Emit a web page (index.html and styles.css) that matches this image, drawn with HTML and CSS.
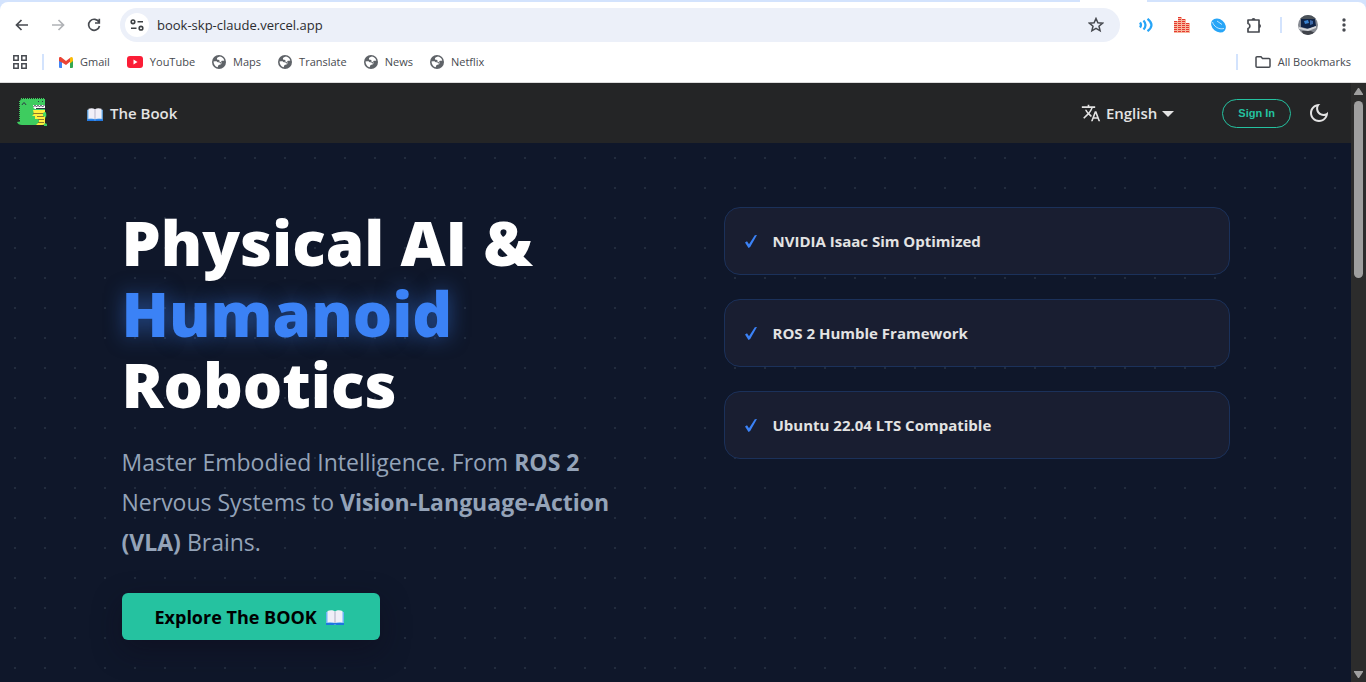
FILE: index.html
```
<!DOCTYPE html>
<html lang="en">
<head>
    <meta charset="UTF-8">
    <meta name="viewport" content="width=device-width, initial-scale=1.0">
    <title>Physical AI &amp; Humanoid Robotics</title>
    <link rel="stylesheet" href="styles.css">
</head>
<body>
    <!-- shared icons -->
    <svg class="sprite" aria-hidden="true">
        <symbol id="globe" viewBox="0 0 14 14">
            <circle cx="7" cy="7" r="7" fill="#5f6368"/>
            <path d="M8 1.500C6 2 4.500 3 5 4.200c.5 1 2 .3 2.500 1.300.5 1.200-2.500 1-4.500.8L1.500 6.500C1.500 9 3 11.500 5.500 12.300c.7-.8.5-1.800 1.200-2.300 1-.7 2.300-.2 2.800-1.500.4-1-.6-1.600-.2-2.300.5-.9 2-.3 3-.8C11.500 3 10 1.800 8 1.500z" fill="#fff"/>
            <path d="M5 6.500c2 .2 4 .6 4 2" fill="none" stroke="#5f6368" stroke-width="1.200"/>
        </symbol>
        <symbol id="book" viewBox="0 0 18 15">
            <path d="M0 2h18v13H0z" fill="#6db4f5"/>
            <path d="M0 13h18v2H10.500l-1.500-.7-1.500.7H0z" fill="#1f76e0"/>
            <path d="M1.500 1C4 0 7 0 9 1.500 11 0 14 0 16.500 1v11.500C14 12 11 12 9 13c-2-1-5-1-7.500-.5z" fill="#f0eff8"/>
            <path d="M9 1.500V13" stroke="#b9b8cc" stroke-width="1.200"/>
        </symbol>
        <symbol id="check" viewBox="0 0 12 13">
            <path d="M0 7.500 2 6.300 4 9.300 9.800.3 12 0 5.200 12 3.500 13z" fill="#3b82f6"/>
        </symbol>
    </svg>

    <div class="browser">
        <div class="tab-strip"><span class="active-tab"></span></div>
        <div class="toolbar">
            <button class="tool" aria-label="Back"><svg width="14" height="12" viewBox="0 0 14 12"><path d="M13 6H1.500M6.500 1l-5 5 5 5" fill="none" stroke="#474a50" stroke-width="1.700"/></svg></button>
            <button class="tool" aria-label="Forward"><svg width="14" height="12" viewBox="0 0 14 12"><path d="M1 6h11.500M7.500 1l5 5-5 5" fill="none" stroke="#b0b2b6" stroke-width="1.700"/></svg></button>
            <button class="tool" aria-label="Reload"><svg width="14" height="14" viewBox="0 0 14 14"><path d="M12 4.200A5.500 5.500 0 1 0 12.500 8M12.300.800v4.200H8" fill="none" stroke="#474a50" stroke-width="1.700"/></svg></button>
            <div class="omnibox">
                <button class="site-info" aria-label="View site information"><svg width="14" height="12" viewBox="0 0 14 12" fill="none" stroke="#3c4043" stroke-width="1.600"><circle cx="3" cy="2.800" r="1.800"/><path d="M7.500 2.800H13M1 9.200h5.500"/><circle cx="11" cy="9.200" r="1.800"/></svg></button>
                <input type="text" class="url" aria-label="Address" value="book-skp-claude.vercel.app">
                <button class="star" aria-label="Bookmark this tab"><svg width="16" height="16" viewBox="0 0 16 16"><path d="M8 1.500l1.900 4.300 4.700.4-3.600 3 1.100 4.600L8 11.400l-4.100 2.400L5 9.200l-3.600-3 4.700-.4z" fill="none" stroke="#474a50" stroke-width="1.500"/></svg></button>
            </div>
            <div class="extensions">
                <button class="tool" aria-label="Read aloud"><svg width="14" height="14" viewBox="0 0 14 14" fill="none" stroke="#27a5f7" stroke-width="2.200"><path d="M1 4.500q2 2.500 0 5"/><path d="M4.500 2.500q4 4.500 0 9"/><path d="M8.500.800q8 6.200 0 12.400"/></svg></button>
                <button class="tool" aria-label="Volume"><svg width="16" height="16" viewBox="0 0 16 16"><path d="M0 4h4V0h4v2h4v4h4v10H0z" fill="#f7b79e"/><path d="M0 4.500h4M4 .500h4M4 2.500h8M0 6.500h16M4 4.500h8M0 8.500h16M0 10.500h16M0 12.500h16M0 14.500h16" stroke="#e53a30" stroke-dasharray="3 1"/></svg></button>
                <button class="tool" aria-label="Disc"><svg width="15" height="15" viewBox="0 0 15 15"><ellipse cx="7.500" cy="7.500" rx="8" ry="6.300" transform="rotate(40 7.500 7.500)" fill="#27a5f7"/><path d="M1.500 4c1 4 6 8 11.500 6.500M6 3l5 3.500" fill="none" stroke="#fff" stroke-width=".7"/></svg></button>
                <button class="tool" aria-label="Extensions"><svg width="18" height="18" viewBox="0 0 18 18"><path d="M3 4h11v12H3v-3.500c2.500-.5 2.500-4.500 0-5z" fill="none" stroke="#474a50" stroke-width="1.700" stroke-linejoin="round"/><path d="M6.500 4a2 2 0 0 1 4 0zM14 8a2 2 0 0 1 0 4z" fill="#474a50"/></svg></button>
                <span class="divider"></span>
                <button class="tool" aria-label="Profile"><svg width="20" height="20" viewBox="0 0 20 20"><clipPath id="avatar"><circle cx="10" cy="10" r="10"/></clipPath><g clip-path="url(#avatar)"><path d="M0 0h20v20H0z" fill="#858991"/><path d="M0 0h20v4H0z" fill="#4c535a"/><path d="M3 4h14l1 7-7 3-8-2z" fill="#102447"/><path d="M6 6l4-1 1 3-4 1z" fill="#3b83cf"/><path d="M12 5l3 1v3l-3 1z" fill="#3d69a8"/><path d="M1 12l8 2 9-3v2l-8 3-9-2z" fill="#d5d7da"/><path d="M4 16h9l4 2-5 2H5z" fill="#41444b"/></g></svg></button>
                <button class="tool" aria-label="Menu"><svg width="4" height="14" viewBox="0 0 4 14" fill="#474a50"><circle cx="2" cy="2" r="1.700"/><circle cx="2" cy="7" r="1.700"/><circle cx="2" cy="12" r="1.700"/></svg></button>
            </div>
        </div>
        <div class="bookmarks">
            <button class="apps" aria-label="Apps"><svg width="14" height="14" viewBox="0 0 14 14" fill="none" stroke="#474a50" stroke-width="1.500"><path d="M.800.800h4.400v4.400H.800zM8.800.800h4.400v4.400H8.800zM.800 8.800h4.400v4.400H.800zM8.800 8.800h4.400v4.400H8.800z"/></svg></button>
            <span class="divider"></span>
            <a href="#"><svg width="14" height="11" viewBox="0 0 14 11"><path d="M0 2h3v9H1a1 1 0 0 1-1-1z" fill="#4285f4"/><path d="M11 2h3v8a1 1 0 0 1-1 1h-2z" fill="#34a853"/><path d="M0 1.500C0 0 1.500-.3 2.500.5L7 4l4.500-3.500 1 3L7 8 3 5.500 0 4z" fill="#ea4335"/><path d="M11 1q2-2 3 .5V4l-3 2.500z" fill="#fbbc04"/></svg>Gmail</a>
            <a href="#"><svg width="16" height="12" viewBox="0 0 16 12"><rect width="16" height="12" rx="3" fill="#fb1d36"/><path d="M6.500 3.500v5L10.500 6z" fill="#fff"/></svg>YouTube</a>
            <a href="#"><svg width="14" height="14"><use href="#globe"/></svg>Maps</a>
            <a href="#"><svg width="14" height="14"><use href="#globe"/></svg>Translate</a>
            <a href="#"><svg width="14" height="14"><use href="#globe"/></svg>News</a>
            <a href="#"><svg width="14" height="14"><use href="#globe"/></svg>Netflix</a>
            <span class="divider last"></span>
            <a href="#"><svg width="16" height="12" viewBox="0 0 16 12"><path d="M1 10.200V1.800a1 1 0 0 1 1-1h4l1.500 1.700H14a1 1 0 0 1 1 1v6.700a1 1 0 0 1-1 1H2a1 1 0 0 1-1-1z" fill="none" stroke="#474a50" stroke-width="1.500"/></svg>All Bookmarks</a>
        </div>
    </div>

    <div class="viewport">
        <div class="page">
            <nav class="navbar">
                <a href="#" class="logo" aria-label="Home">
                    <svg width="32" height="32" viewBox="0 0 32 32">
                        <path d="M4 4q0-2 2-2h23v13l1 1v3l-1 3v4l2 1v2h-3v-1H6q-4 0-5-3l3-.5z" fill="#3ecc5f"/>
                        <path d="M3.500 4v20M5 1.500h24" stroke="#3ecc5f" stroke-dasharray="1 1"/>
                        <path d="M17 13h12v12q0 3-3 3h-6l3-3v-3h-4v-3h-3l2-2z" fill="#ffee3d"/>
                        <path d="M17 8h12v4H19q-2-1-2-4z" fill="#fff"/>
                        <path d="M17.500 9.500l1.500-1 1.500 1 1.500-1 1.500 1 1.500-1 1.500 1 2-1M20 11.500h9" fill="none" stroke="#303846"/>
                        <path d="M6 8q2-4.500 4 0M22 4.500h1M26 4.500h1" fill="none" stroke="#303846"/>
                        <path d="M17 16.500h10M21 19.500h7M22 22.500h6M22 25.500h6" fill="none" stroke="#8a7a2c"/>
                        <path d="M29 15q2 1 1 5l-3-1v-3z" fill="#44d860"/>
                    </svg>
                </a>
                <a href="#" class="nav-link"><svg class="book" width="16" height="13"><use href="#book"/></svg>The Book</a>
                <div class="nav-right">
                    <button class="nav-link language">
                        <svg width="20" height="20" viewBox="0 0 24 24" fill="currentColor"><path d="M12.870 15.070l-2.540-2.510.03-.03c1.740-1.940 2.980-4.170 3.710-6.530H17V4h-7V2H8v2H1v1.990h11.170C11.500 7.920 10.440 9.750 9 11.350 8.070 10.320 7.300 9.190 6.690 8h-2c.73 1.630 1.730 3.170 2.980 4.560l-5.090 5.020L4 19l5-5 3.110 3.110.76-2.040zM18.500 10h-2L12 22h2l1.120-3h4.750L21 22h2l-4.500-12zm-2.620 7l1.620-4.330L19.120 17h-3.240z"/></svg>
                        English
                        <svg class="caret" width="12" height="6"><path d="M0 0h12L6 6z" fill="currentColor"/></svg>
                    </button>
                    <button class="sign-in">Sign In</button>
                    <button class="theme" aria-label="Toggle dark mode"><svg width="24" height="24" viewBox="0 0 24 24"><path fill="currentColor" d="M9.370,5.510C9.190,6.150,9.100,6.820,9.100,7.500c0,4.080,3.320,7.400,7.400,7.400c0.680,0,1.350-0.090,1.990-0.270C17.450,17.190,14.930,19,12,19 c-3.860,0-7-3.140-7-7C5,9.070,6.810,6.550,9.370,5.510z M12,3c-4.970,0-9,4.030-9,9s4.030,9,9,9s9-4.030,9-9c0-0.460-0.040-0.920-0.100-1.360 c-0.980,1.370-2.580,2.260-4.400,2.260c-2.980,0-5.400-2.420-5.400-5.400c0-1.810,0.890-3.420,2.260-4.400C12.920,3.040,12.460,3,12,3L12,3z"/></svg></button>
                </div>
            </nav>

            <header class="hero">
                <div class="container">
                    <div class="intro">
                        <h1>Physical AI &amp; <span class="highlight">Humanoid</span> Robotics</h1>
                        <p>Master Embodied Intelligence. From <b>ROS 2</b> Nervous Systems to <b>Vision-Language-Action (VLA)</b> Brains.</p>
                        <a href="#" class="explore">Explore The BOOK <svg class="book" width="18" height="15"><use href="#book"/></svg></a>
                    </div>
                    <div class="features">
                        <div class="feature"><svg width="12" height="13"><use href="#check"/></svg>NVIDIA Isaac Sim Optimized</div>
                        <div class="feature"><svg width="12" height="13"><use href="#check"/></svg>ROS 2 Humble Framework</div>
                        <div class="feature"><svg width="12" height="13"><use href="#check"/></svg>Ubuntu 22.04 LTS Compatible</div>
                    </div>
                </div>
            </header>
        </div>
        <div class="scrollbar">
            <svg width="9" height="7"><path d="M4 0h1l4 6v1H0V6z" fill="#9f9f9f"/></svg>
            <span class="thumb"></span>
            <svg class="down" width="9" height="7"><path d="M4 7h1l4-6V0H0v1z" fill="#9f9f9f"/></svg>
        </div>
    </div>
</body>
</html>
```

FILE: styles.css
```
* {
    box-sizing: border-box;
}
body {
    margin: 0;
    height: 100vh;
    display: flex;
    flex-direction: column;
    overflow: hidden;
    font-family: "Segoe UI", "Open Sans", sans-serif;
    background: #0f172a;
}
a {
    text-decoration: none;
}
button {
    border: none;
    padding: 0;
    background: none;
    font-family: inherit;
    cursor: pointer;
}
svg {
    display: block;
    flex: none;
}
.sprite {
    position: absolute;
    width: 0;
    height: 0;
}

/* browser bar */
.browser {
    flex: none;
    background: #d3e3fd;
    border-bottom: 1px solid #dcdcdc;
}
.tab-strip {
    height: 2px;
    display: flex;
    justify-content: flex-end;
}
.active-tab {
    width: 67px;
    margin-right: 219px;
    background: #fff;
}
.toolbar {
    height: 46px;
    display: flex;
    align-items: center;
    padding: 0 4px;
    background: #fff;
    border-radius: 8px 8px 0 0;
}
.tool {
    width: 36px;
    height: 34px;
    display: flex;
    align-items: center;
    justify-content: center;
}
.omnibox {
    flex: 1;
    height: 34px;
    margin: 0 8px;
    padding: 0 16px 0 5px;
    display: flex;
    align-items: center;
    border-radius: 17px;
    background: #ecf0f9;
}
.site-info {
    width: 24px;
    height: 24px;
    display: flex;
    align-items: center;
    justify-content: center;
    border-radius: 50%;
    background: #fff;
}
.url {
    flex: 1;
    margin-left: 8px;
    padding: 0;
    border: none;
    outline: none;
    background: none;
    font-family: inherit;
    font-size: 13px;
    color: #2b2c30;
}
.extensions {
    display: flex;
    align-items: center;
}
.divider {
    width: 2px;
    height: 16px;
    margin: 0 8px;
    background: #d3e3fd;
}
.bookmarks {
    height: 34px;
    padding: 0 15px 6px 13px;
    display: flex;
    align-items: center;
    background: #fff;
}
.bookmarks .divider {
    margin: 0 15px;
}
.bookmarks .divider.last {
    margin: 0 17px 0 auto;
}
.bookmarks a {
    display: flex;
    align-items: center;
    gap: 7px;
    font-size: 11px;
    line-height: 16px;
    color: #474a50;
}
.bookmarks a + a {
    margin-left: 17px;
}

/* page */
.viewport {
    flex: 1;
    min-height: 0;
    display: flex;
}
.page {
    flex: 1;
    display: flex;
    flex-direction: column;
}
.navbar {
    height: 60px;
    flex: none;
    display: flex;
    align-items: center;
    padding: 0 20px 0 16px;
    background: #242526;
    color: #e3e3e3;
}
.logo {
    margin-right: 39px;
}
.nav-link {
    display: flex;
    align-items: center;
    gap: 7px;
    font-size: 15px;
    font-weight: 600;
    color: #e3e3e3;
}
.book {
    margin-top: 2px;
}
.nav-right {
    margin-left: auto;
    display: flex;
    align-items: center;
}
.language {
    gap: 5px;
    margin-right: 48px;
}
.caret {
    margin-top: 2px;
}
.sign-in {
    height: 29px;
    padding: 0 15px;
    margin-right: 16px;
    border: 1px solid #25c2a0;
    border-radius: 15px;
    font-family: "Liberation Sans", Arial, sans-serif;
    font-size: 11px;
    font-weight: bold;
    color: #25c2a0;
}
.theme {
    color: #e3e3e3;
}
.hero {
    flex: 1;
    padding: 64px 0;
    background-color: #0f172a;
    background-image: radial-gradient(#222c3e 1px, transparent 1px);
    background-size: 30px 30px;
}
.container {
    max-width: 1140px;
    margin: 0 auto;
    padding: 0 16px;
    display: grid;
    grid-template-columns: 1fr 1fr;
    gap: 96px;
}
h1 {
    margin: 0 0 22px;
    font-size: 62px;
    font-weight: 800;
    line-height: 71px;
    color: #fff;
}
.highlight {
    display: block;
    color: #3b82f6;
    text-shadow: 0 0 20px rgba(59, 130, 246, 0.5);
}
.intro p {
    margin: 0 0 31px;
    font-size: 23px;
    line-height: 40px;
    color: #94a3b8;
}
.explore {
    height: 47px;
    padding: 0 36px 0 33px;
    display: inline-flex;
    align-items: center;
    gap: 9px;
    border-radius: 6px;
    background: #25c2a0;
    box-shadow: 0 10px 30px rgba(15, 10, 25, 0.4);
    font-size: 18px;
    font-weight: 700;
    line-height: 24px;
    color: #000;
}
.features {
    display: flex;
    flex-direction: column;
    gap: 24px;
}
.feature {
    padding: 20px;
    display: flex;
    align-items: center;
    gap: 16px;
    border: 1px solid #1b315a;
    border-radius: 16px;
    background: #191e31;
    font-size: 15px;
    font-weight: 700;
    line-height: 26px;
    color: #e3e3e3;
}

/* scrollbar */
.scrollbar {
    width: 15px;
    padding: 5px 0 4px;
    display: flex;
    flex-direction: column;
    align-items: center;
    background: #2c2c2c;
}
.thumb {
    width: 9px;
    height: 30%;
    margin-top: 6px;
    border-radius: 5px;
    background: #9f9f9f;
}
.down {
    margin-top: auto;
}
```
